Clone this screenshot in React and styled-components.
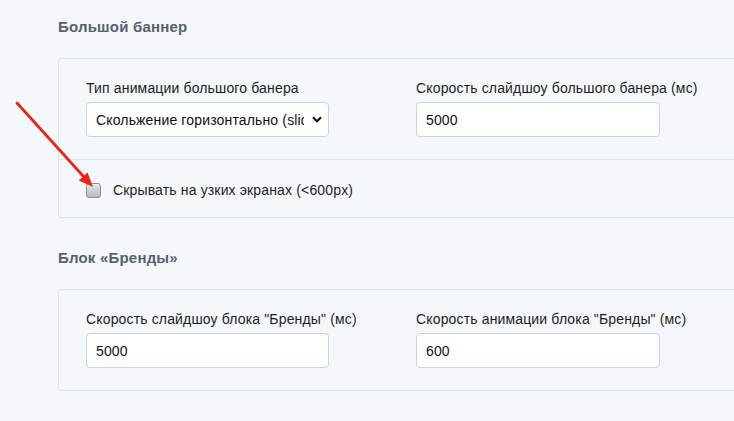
import React from "react";
import styled, { createGlobalStyle } from "styled-components";

const GlobalStyle = createGlobalStyle`
  html, body {
    margin: 0;
    padding: 0;
    background: #f5f8fa;
    overflow: hidden;
  }
  body {
    font-family: "Liberation Sans", Arial, sans-serif;
    color: #1b1f22;
  }
`;

const SETTINGS = [
  {
    title: "Большой баннер",
    fields: [
      { label: "Тип анимации большого банера", type: "select", value: "Скольжение горизонтально (slide)" },
      { label: "Скорость слайдшоу большого банера (мс)", value: "5000" },
    ],
    checkbox: "Скрывать на узких экранах (<600px)",
  },
  {
    title: "Блок «Бренды»",
    fields: [
      { label: 'Скорость слайдшоу блока "Бренды" (мс)', value: "5000" },
      { label: 'Скорость анимации блока "Бренды" (мс)', value: "600" },
    ],
  },
];

const App = () => {
  return (
    <>
      <GlobalStyle />
      <Page>
        {SETTINGS.map((section) => (
          <Section key={section.title}>
            <SectionTitle>{section.title}</SectionTitle>
            <Card>
              <FieldRow>
                {section.fields.map((field) => (
                  <Field key={field.label}>
                    <Label>{field.label}</Label>
                    {field.type === "select" ? (
                      <SelectWrap>
                        <Select defaultValue={field.value}>
                          <option>{field.value}</option>
                        </Select>
                        <Chevron viewBox="0 0 10 7">
                          <path d="M1 1.2 L5 5.2 L9 1.2" />
                        </Chevron>
                      </SelectWrap>
                    ) : (
                      <Input defaultValue={field.value} />
                    )}
                  </Field>
                ))}
              </FieldRow>
              {section.checkbox && (
                <CheckRow>
                  <CheckLabel>
                    <CheckBox />
                    {section.checkbox}
                  </CheckLabel>
                </CheckRow>
              )}
            </Card>
          </Section>
        ))}
        <Pointer viewBox="0 0 120 210" width="120" height="210">
          <line x1="17" y1="103" x2="84" y2="177" />
          <polygon points="93,187 78.8,180.6 87.6,172.6" />
        </Pointer>
      </Page>
    </>
  );
};

const Page = styled.div`
  position: relative;
  padding: 17px 0 0 58px;
`;

const Section = styled.section`
  & + & {
    margin-top: 30px;
  }
`;

const SectionTitle = styled.h3`
  margin: 0 0 21px;
  font-size: 15px;
  line-height: 20px;
  font-weight: 700;
  letter-spacing: 0.2px;
  color: #56626c;
`;

const Card = styled.div`
  border: 1px solid #dde5eb;
  border-right: none;
  border-radius: 3px 0 0 3px;
  background: #f5f8fa;
`;

const FieldRow = styled.div`
  display: grid;
  grid-template-columns: 243px 244px;
  column-gap: 87px;
  padding: 19px 27px 22px;
`;

const Field = styled.div`
  display: flex;
  flex-direction: column;
`;

const Label = styled.label`
  font-size: 14px;
  line-height: 20px;
  letter-spacing: 0.15px;
  margin-bottom: 4px;
  color: #1b1f22;
  white-space: nowrap;
`;

const controlBase = `
  box-sizing: border-box;
  width: 100%;
  height: 35px;
  border: 1px solid #c9d4dd;
  border-radius: 4px;
  background: #fff;
  font-family: "Liberation Sans", Arial, sans-serif;
  font-size: 14px;
  letter-spacing: 0.15px;
  color: #111;
  outline: none;
`;

const Input = styled.input`
  ${controlBase}
  padding: 0 9px;
`;

const SelectWrap = styled.div`
  position: relative;
`;

const Select = styled.select`
  ${controlBase}
  appearance: none;
  padding: 0 24px 0 9px;
`;

const Chevron = styled.svg`
  position: absolute;
  right: 7px;
  top: 14px;
  width: 10px;
  height: 7px;
  fill: none;
  stroke: #111;
  stroke-width: 2.2;
  pointer-events: none;
`;

const CheckRow = styled.div`
  border-top: 1px solid #dde5eb;
  padding: 22px 27px 19px;
`;

const CheckLabel = styled.label`
  display: flex;
  align-items: center;
  gap: 12px;
  font-size: 14px;
  line-height: 16px;
  letter-spacing: 0.15px;
  color: #1b1f22;
`;

const CheckBox = styled.span`
  box-sizing: border-box;
  width: 15px;
  height: 15px;
  border: 1px solid #8c9196;
  border-radius: 3px;
  background: linear-gradient(#e4e6e8, #b7babd);
  box-shadow: inset 0 1px 0 rgba(255, 255, 255, 0.6);
`;

const Pointer = styled.svg`
  position: absolute;
  left: 0;
  top: 0;
  pointer-events: none;

  line {
    stroke: #ec2418;
    stroke-width: 2.8;
    stroke-linecap: round;
  }

  polygon {
    fill: #ec2418;
  }
`;

export default App;
